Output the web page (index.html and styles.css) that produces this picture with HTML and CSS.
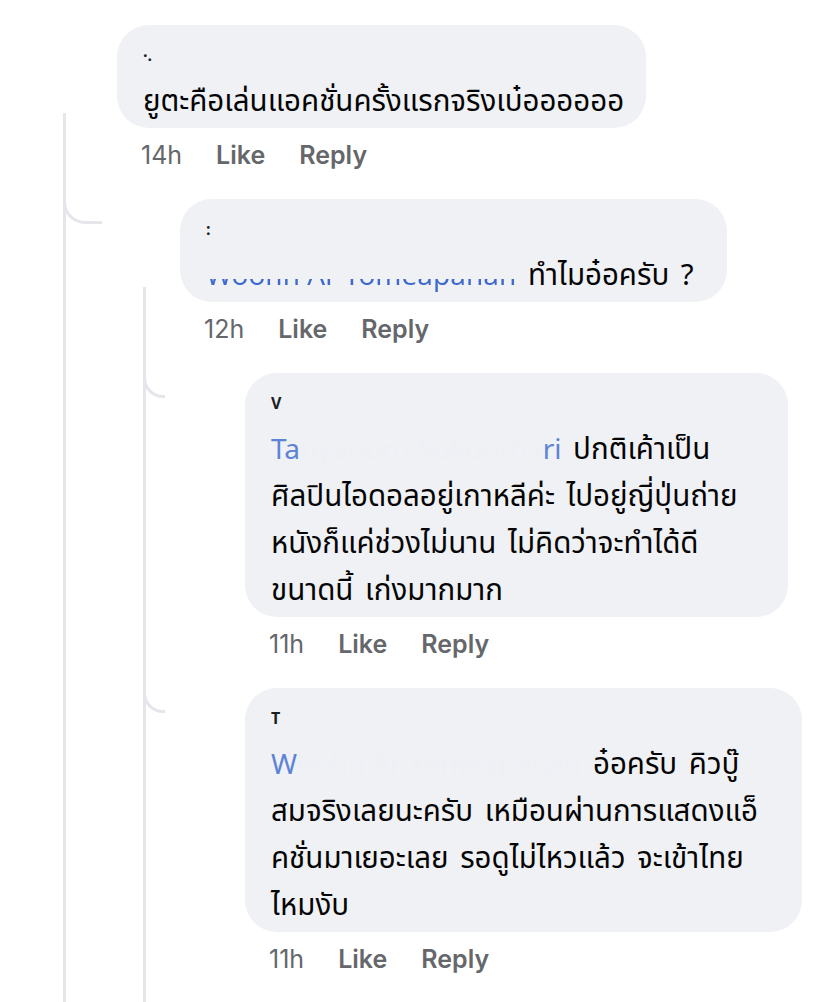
FILE: index.html
```html
<!DOCTYPE html>
<html lang="th">
<head>
<meta charset="utf-8">
<title>Comments</title>
<link rel="stylesheet" href="styles.css">
</head>
<body>
<div class="thread">
  <div class="row root">
    <div class="rail rail-root">
      <div class="avatar-slot"></div>
      <div class="line"></div>
    </div>
    <div class="body body-root">
      <div class="bubble w1">
        <div class="name"><span class="speck">·.</span><span class="ghost">Wanida Rattanakul</span></div>
        <div class="text">ยูตะคือเล่นแอคชั่นครั้งแรกจริงเบ๋ออออออ</div>
      </div>
      <div class="meta"><span class="time">14h</span><span class="act">Like</span><span class="act">Reply</span></div>

      <div class="row reply1">
        <div class="elbow elbow-1"></div>
        <div class="rail rail-1">
          <div class="avatar-slot"></div>
          <div class="line"></div>
        </div>
        <div class="body body-1">
          <div class="bubble w2">
            <div class="name"><span class="speck">:</span><span class="ghost">Sirilak Thongchai</span></div>
            <div class="text"><span class="mention cut">Woohn Ar Yomeapanan</span> ทำไมอ๋อครับ ?</div>
          </div>
          <div class="meta"><span class="time">12h</span><span class="act">Like</span><span class="act">Reply</span></div>

          <div class="row reply2">
            <div class="elbow elbow-2"></div>
            <div class="spacer"></div>
            <div class="body">
              <div class="bubble w3">
                <div class="name"><span class="speck">V</span><span class="ghost">ipada Chaiyasit</span></div>
                <div class="text"><span class="mention"><span class="vis">Ta</span><span class="ghost-m">nyaporn Sukontha</span><span class="vis">ri</span></span> ปกติเค้าเป็น<br>ศิลปินไอดอลอยู่เกาหลีค่ะ ไปอยู่ญี่ปุ่นถ่าย<br>หนังก็แค่ช่วงไม่นาน ไม่คิดว่าจะทำได้ดี<br>ขนาดนี้ เก่งมากมาก</div>
              </div>
              <div class="meta"><span class="time">11h</span><span class="act">Like</span><span class="act">Reply</span></div>
            </div>
          </div>

          <div class="row reply2">
            <div class="elbow elbow-2"></div>
            <div class="spacer"></div>
            <div class="body">
              <div class="bubble w4">
                <div class="name"><span class="speck">T</span><span class="ghost">hanawat Boonmee</span></div>
                <div class="text"><span class="mention"><span class="vis">W</span><span class="ghost-m">oohn Ar Yomeapanan</span></span> อ๋อครับ คิวบู๊<br>สมจริงเลยนะครับ เหมือนผ่านการแสดงแอ็<br>คชั่นมาเยอะเลย รอดูไม่ไหวแล้ว จะเข้าไทย<br>ไหมงับ</div>
              </div>
              <div class="meta"><span class="time">11h</span><span class="act">Like</span><span class="act">Reply</span></div>
            </div>
          </div>
        </div>
      </div>
    </div>
  </div>
</div>
</body>
</html>
```

FILE: styles.css
```css
html, body {
  margin: 0;
  padding: 0;
  background: #ffffff;
  overflow: hidden;
}

body {
  width: 828px;
  height: 1002px;
  font-family: "Noto Sans Thai", "Noto Sans Thai UI", "Noto Sans", "Liberation Sans", sans-serif;
  color: #050505;
}

.thread {
  padding-top: 25px;
}

.row {
  display: flex;
  align-items: stretch;
}

.rail {
  display: flex;
  flex-direction: column;
  flex: none;
}

.rail-root {
  width: 117px;
}

.rail-1 {
  width: 78px;
}

.avatar-slot {
  height: 88px;
  flex: none;
}

.line {
  flex: 1;
  border-left: 3px solid #e4e6eb;
}

.rail-root .line {
  margin-left: 63px;
}

.rail-1 .line {
  margin-left: 41px;
}

.body {
  display: flex;
  flex-direction: column;
  align-items: flex-start;
}

.body-root {
  padding-bottom: 200px;
}

.body-1 {
  padding-bottom: 120px;
}

.reply1,
.reply2 {
  margin-top: 25px;
}

.elbow {
  flex: none;
  align-self: flex-start;
  box-sizing: border-box;
  height: 25px;
  border-left: 3px solid #e4e6eb;
  border-bottom: 3px solid #e4e6eb;
}

.elbow-1 {
  margin-left: -54px;
  width: 39px;
  border-bottom-left-radius: 22px;
}

.elbow-2 {
  margin-left: -37px;
  width: 22px;
  border-bottom-left-radius: 20px;
}

.spacer {
  flex: none;
  width: 80px;
}

.bubble {
  box-sizing: border-box;
  background: #f0f1f5;
  border-radius: 32px;
  padding: 10px 20px 2px 26px;
}

.w1 { width: 529px; }
.w2 { width: 547px; }
.w3 { width: 543px; }
.w4 { width: 557px; }

.name {
  height: 44px;
  line-height: 40px;
  font-size: 21px;
  font-weight: 700;
  white-space: nowrap;
  overflow: hidden;
}

.speck {
  color: #1c1e21;
  font-size: 16px;
}

.ghost {
  color: rgba(240, 241, 245, 0);
}

.text {
  font-size: 29.5px;
  line-height: 47px;
  word-spacing: 4px;
  white-space: nowrap;
}

.mention {
  color: #4a72cf;
  font-size: 28px;
  word-spacing: 0;
}

.mention.cut {
  color: transparent;
  background: linear-gradient(to bottom, transparent 0, transparent 55%, #3f69cc 55%, #3f69cc 100%);
  -webkit-background-clip: text;
  background-clip: text;
}

.mention .vis {
  color: #5d83d6;
}

.mention .ghost-m {
  color: #eef0f6;
}

.meta {
  display: flex;
  gap: 34px;
  margin-top: 8px;
  padding-left: 24px;
  height: 38px;
  line-height: 38px;
  font-family: "Inter", "Liberation Sans", sans-serif;
  font-size: 25px;
  color: #65676b;
}

.time {
  font-weight: 400;
}

.act {
  font-weight: 600;
}
```
